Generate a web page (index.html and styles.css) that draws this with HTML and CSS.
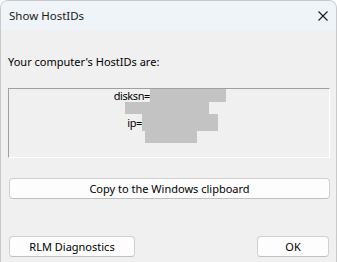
FILE: index.html
```html
<!DOCTYPE html>
<html lang="en">
<head>
  <meta charset="UTF-8">
  <title>Show HostIDs</title>
  <link rel="stylesheet" href="styles.css">
</head>
<body>
<div class="window">
  <div class="titlebar">
    <span class="title">Show HostIDs</span>
    <svg class="close" width="10" height="10" viewBox="0 0 10 10">
      <path d="M0.5 0.5 L9.5 9.5 M9.5 0.5 L0.5 9.5" stroke="#1a1a1a" stroke-width="1.1" fill="none"/>
    </svg>
  </div>
  <div class="content">
    <p class="intro">Your computer's HostIDs are:</p>
    <div class="ids">
      <div class="row r1"><span class="key k1">disksn=</span><span class="mask m1"></span></div>
      <div class="row r2"><span class="mask m2"></span></div>
      <div class="row r3"><span class="key k3">ip=</span><span class="mask m3"></span></div>
      <div class="row r4"><span class="mask m4"></span></div>
    </div>
    <button class="btn copy">Copy to the Windows clipboard</button>
    <div class="actions">
      <button class="btn diag">RLM Diagnostics</button>
      <button class="btn ok">OK</button>
    </div>
  </div>
</div>
</body>
</html>
```

FILE: styles.css
```css
html, body { margin: 0; padding: 0; background: #ffffff; }
body { font-family: "Noto Sans", "Open Sans", sans-serif; font-size: 11px; color: #000; }

.window {
  width: 337px; height: 262px; box-sizing: border-box;
  border: 1px solid #c9c9c9; border-bottom: none;
  border-radius: 8px 8px 0 0; overflow: hidden;
  background: #f0f0f0;
  display: flex; flex-direction: column;
}
.titlebar {
  height: 29px; background: #eef4f8;
  display: flex; align-items: center; justify-content: space-between;
  padding: 0 8px 0 8px;
}
.title { font-size: 11.5px; color: #1a1a1a; }

.content { padding: 0 6px 0 7px; flex: 1; display: flex; flex-direction: column; }
.intro { margin: 24px 0 0 0; line-height: 16px; }

.ids {
  margin-top: 18px; height: 70px; box-sizing: border-box;
  border: 1px solid; border-color: #a0a0a0 #ffffff #ffffff #a0a0a0;
  display: flex; flex-direction: column;
}
.row { display: flex; align-items: center; }
.r1 { height: 13px; }
.r2 { height: 12px; padding-left: 116px; }
.r3 { height: 17px; }
.r4 { height: 12px; padding-left: 136px; }
.key { text-align: right; line-height: 12px; letter-spacing: -0.4px; }
.k1 { width: 141px; }
.k3 { width: 133px; }
.mask { display: block; background: #c3c3c3; height: 100%; }
.m1 { width: 76px; }
.m2 { width: 84px; }
.m3 { width: 76px; }
.m4 { width: 52px; }

.btn {
  font-family: inherit; font-size: 11px; color: #000;
  background: #fdfdfd; border: 1px solid #d0d0d0; border-bottom-color: #c0c0c0;
  border-radius: 4px; height: 21px; padding: 0; line-height: 19px;
}
.copy { margin: 20px 0 0 1px; width: 321px; }
.actions { display: flex; justify-content: space-between; margin: 37px 0 0 1px; }
.diag { width: 126px; }
.ok { width: 72px; margin-right: 1px; }
```
